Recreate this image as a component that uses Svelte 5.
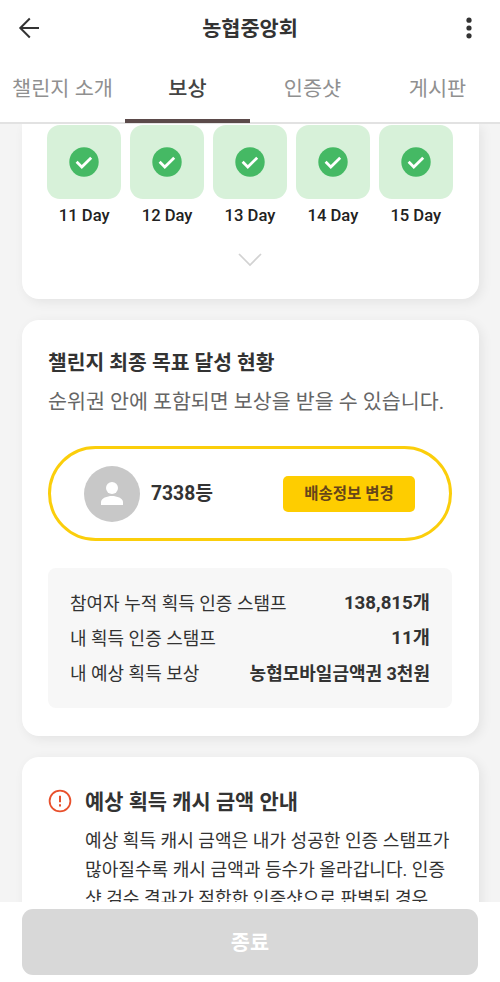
<script>
    let activeTab = $state('보상');

    const tabs = ['챌린지 소개', '보상', '인증샷', '게시판'];
    const days = [11, 12, 13, 14, 15];

    const stats = [
        { label: '참여자 누적 획득 인증 스탬프', value: '138,815개' },
        { label: '내 획득 인증 스탬프', value: '11개' },
        { label: '내 예상 획득 보상', value: '농협모바일금액권 3천원' },
    ];

    const noticeLines = [
        '예상 획득 캐시 금액은 내가 성공한 인증 스탬프가',
        '많아질수록 캐시 금액과 등수가 올라갑니다. 인증',
        '샷 검수 결과가 적합한 인증샷으로 판별된 경우',
    ];
</script>

<div class="app">
    <header>
        <button class="icon-button" aria-label="뒤로">
            <svg width="22" height="22" viewBox="0 0 22 22" fill="none" stroke="#333" stroke-width="2">
                <path d="M21 11H2.500M11.8 1.5L2.300 11l9.5 9.5" />
            </svg>
        </button>
        <h1>농협중앙회</h1>
        <button class="icon-button" aria-label="더보기">
            <svg width="6" height="22" viewBox="0 0 6 22" fill="#333">
                <circle cx="3" cy="3.2" r="2.6" />
                <circle cx="3" cy="11" r="2.6" />
                <circle cx="3" cy="18.8" r="2.6" />
            </svg>
        </button>
    </header>

    <nav>
        {#each tabs as tab (tab)}
            <button class="tab" class:active={tab === activeTab} onclick={() => (activeTab = tab)}>{tab}</button>
        {/each}
    </nav>

    <main>
        <section class="card stamps">
            <div class="days">
                {#each days as day (day)}
                    <div class="day">
                        <div class="tile">
                            <svg width="30" height="30" viewBox="0 0 30 30" fill="none">
                                <circle cx="15" cy="15" r="14.7" fill="#45b964" />
                                <path d="M7.6 14.8l5.2 5.2 9.4-9.3" stroke="#fff" stroke-width="2.8" />
                            </svg>
                        </div>
                        <span>{day} Day</span>
                    </div>
                {/each}
            </div>
            <svg class="chevron" width="24" height="14" viewBox="0 0 24 14" fill="none" stroke="#d2d2d2" stroke-width="1.7">
                <path d="M1 1l11 11L23 1" />
            </svg>
        </section>

        <section class="card goal">
            <h2>챌린지 최종 목표 달성 현황</h2>
            <p class="sub">순위권 안에 포함되면 보상을 받을 수 있습니다.</p>

            <div class="rank">
                <div class="avatar">
                    <svg width="22" height="23" viewBox="0 0 22 23" fill="#fff">
                        <circle cx="11" cy="6" r="6" />
                        <path d="M0 23v-3c0-3.8 6.2-6 11-6s11 2.200 11 6v3z" />
                    </svg>
                </div>
                <strong>7338등</strong>
                <button class="shipping">배송정보 변경</button>
            </div>

            <div class="stats">
                {#each stats as stat (stat.label)}
                    <div class="stat">
                        <span>{stat.label}</span>
                        <strong>{stat.value}</strong>
                    </div>
                {/each}
            </div>
        </section>

        <section class="card notice">
            <svg class="alert" width="24" height="24" viewBox="0 0 24 24" fill="none">
                <circle cx="12" cy="12" r="10.400" stroke="#e8502c" stroke-width="1.8" />
                <path d="M12 6.800v6.400M12 15.200v2.200" stroke="#e8502c" stroke-width="2" />
            </svg>
            <div>
                <h2>예상 획득 캐시 금액 안내</h2>
                {#each noticeLines as line}
                    <p>{line}</p>
                {/each}
            </div>
        </section>
    </main>

    <footer>
        <button class="finish" disabled>종료</button>
    </footer>
</div>

<style>
    :global(body) {
        margin: 0;
        background: #fff;
    }

    .app {
        display: flex;
        flex-direction: column;
        height: 982px;
        overflow: hidden;
        background: #fff;
        color: #333;
        font-family: Roboto, 'Noto Sans CJK KR', sans-serif;
        white-space: nowrap;
    }

    .app * {
        box-sizing: border-box;
    }

    h1, h2, p {
        margin: 0;
    }

    button {
        padding: 0;
        border: none;
        background: none;
        color: inherit;
        font-family: inherit;
    }

    header {
        display: flex;
        align-items: center;
        justify-content: space-between;
        flex: none;
        height: 56px;
        padding: 0 18px;
    }

    .icon-button {
        display: flex;
        justify-content: flex-start;
        width: 28px;
    }

    .icon-button:last-child {
        justify-content: flex-end;
        padding-right: 10px;
    }

    h1 {
        padding-top: 1px;
        font-size: 20.8px;
        line-height: 30px;
        font-weight: 700;
    }

    nav {
        display: flex;
        flex: none;
        height: 68px;
        border-bottom: 2px solid #e2e2e2;
    }

    .tab {
        flex: 1;
        height: 67px;
        padding-bottom: 5px;
        border-top: 4px solid transparent;
        border-bottom: 4px solid transparent;
        color: #909090;
        font-size: 20.8px;
    }

    .tab.active {
        border-bottom-color: #5b4a4a;
        color: #444;
        font-weight: 500;
    }

    main {
        flex: 1;
        min-height: 0;
        overflow: hidden;
        padding: 0 21px 0 22px;
        background: #f4f4f4;
    }

    .card {
        border-radius: 17px;
        background: #fff;
        box-shadow: 3px 3px 12px rgba(0, 0, 0, 0.07);
    }

    .stamps {
        display: flex;
        flex-direction: column;
        align-items: center;
        height: 175px;
        padding-top: 1px;
        padding-right: 1px;
        border-radius: 0 0 17px 17px;
    }

    .days {
        display: flex;
        gap: 8.500px;
    }

    .day {
        display: flex;
        flex-direction: column;
        align-items: center;
        width: 74.4px;
        color: #222;
        font-size: 16.600px;
        font-weight: 500;
        line-height: 20px;
    }

    .tile {
        display: flex;
        align-items: center;
        justify-content: center;
        width: 100%;
        height: 74px;
        margin-bottom: 7px;
        border-radius: 13px;
        background: #d7f1d9;
    }

    .chevron {
        margin-top: 27px;
    }

    .goal {
        height: 416px;
        margin: 21px 0;
        padding: 27px 27px 0 26px;
    }

    h2 {
        font-size: 20.4px;
        line-height: 32px;
        font-weight: 700;
    }

    .sub {
        margin-top: 7px;
        color: #666;
        font-size: 20.6px;
        line-height: 32px;
    }

    .rank {
        display: flex;
        align-items: center;
        height: 95px;
        margin-top: 28px;
        padding: 0 34px 0 33px;
        border: 3px solid #fbce0b;
        border-radius: 48px;
    }

    .avatar {
        display: flex;
        align-items: center;
        justify-content: center;
        width: 56px;
        height: 56px;
        border-radius: 50%;
        background: #c8c8c8;
    }

    .rank strong {
        margin-left: 11px;
        padding-bottom: 3px;
        font-size: 19.3px;
    }

    .shipping {
        width: 132px;
        height: 36px;
        margin-left: auto;
        padding-bottom: 3px;
        border-radius: 5px;
        background: #fecd00;
        color: #66451a;
        font-size: 15.5px;
        font-weight: 700;
    }

    .stats {
        height: 140px;
        margin-top: 27px;
        padding: 18px 22px 0;
        border-radius: 8px;
        background: #f7f7f7;
    }

    .stat {
        display: flex;
        justify-content: space-between;
        font-size: 18px;
        line-height: 35px;
    }

    .stat:not(:last-child) strong {
        font-size: 18.7px;
    }

    .notice {
        display: flex;
        height: 300px;
        padding: 29px 26px 0;
    }

    .alert {
        flex: none;
        margin: 3px 13px 0 0;
    }

    .notice h2 {
        margin-bottom: 8px;
        font-size: 20.9px;
    }

    .notice p {
        font-size: 18.1px;
        line-height: 29px;
    }

    footer {
        flex: none;
        height: 80px;
        padding: 7px 22px;
        background: #fff;
    }

    .finish {
        width: 100%;
        height: 66px;
        padding-bottom: 3px;
        border-radius: 11px;
        background: #d8d8d8;
        color: #fff;
        font-size: 20.8px;
        font-weight: 700;
    }
</style>
